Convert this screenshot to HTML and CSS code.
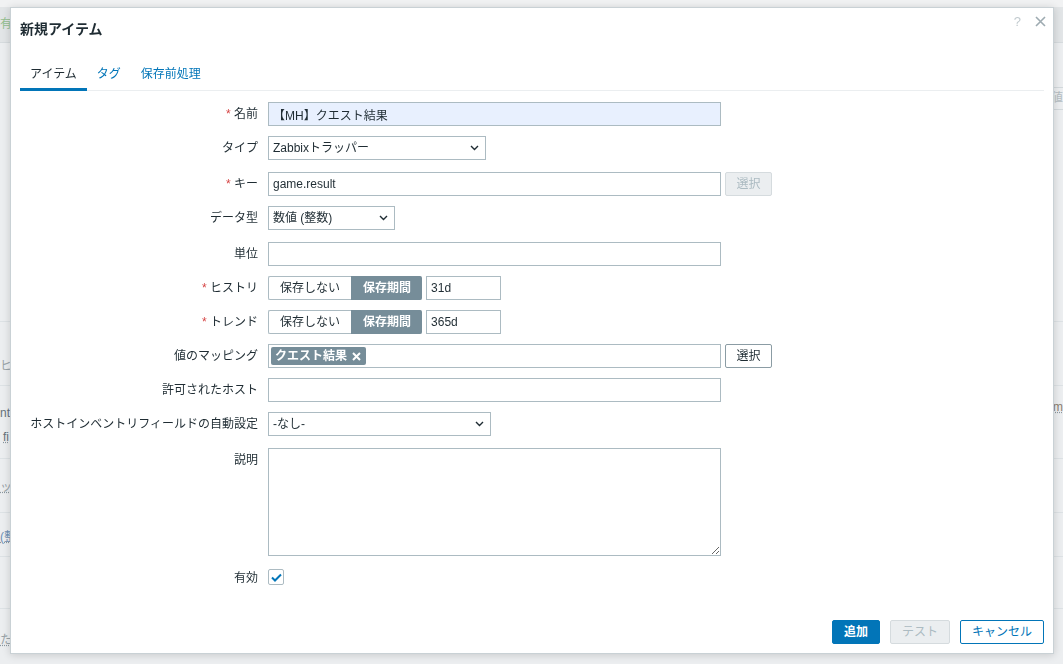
FILE: index.html
```html
<!DOCTYPE html>
<html lang="ja">
<head>
  <meta charset="UTF-8">
  <meta name="viewport" content="width=device-width, initial-scale=1">
  <title>新規アイテム</title>
  <link rel="stylesheet" href="styles.css">
</head>
<body>

  <!-- page behind the modal -->
  <div class="page">
    <div class="page-top"></div>
    <div class="page-band"><span class="page-status">有</span></div>
    <div class="page-filter"><span class="page-search">値</span></div>
    <div class="page-table">
      <div class="page-row row-1"><span class="frag">ヒ</span></div>
      <div class="page-row row-2">
        <div>
          <span class="frag dark">nt</span>
          <span class="frag dark link second">fi</span>
        </div>
        <span class="frag right link">m</span>
      </div>
      <div class="page-row row-3"><span class="frag link">ッ</span></div>
      <div class="page-row row-4"><span class="frag blue link">(整</span></div>
      <div class="page-row row-5"></div>
      <div class="page-row row-6 last"><span class="frag link">た</span></div>
    </div>
  </div>

  <div class="dialog">
    <div class="dialog-head">
      <h4>新規アイテム</h4>
      <div class="head-icons">
        <span class="help">?</span>
        <svg class="close" width="11" height="11" viewBox="0 0 11 11">
          <path d="M1 1L10 10M10 1L1 10" stroke="#9eabb1" stroke-width="1.6" fill="none"/>
        </svg>
      </div>
    </div>

    <div class="dialog-body">
      <ul class="tabs">
        <li class="active">アイテム</li>
        <li>タグ</li>
        <li>保存前処理</li>
      </ul>

      <div class="form-grid">
        <label class="required">名前</label>
        <div class="field"><input class="text wide autofill" type="text" value="【MH】クエスト結果"></div>

        <label>タイプ</label>
        <div class="field">
          <div class="select type-select"><span>Zabbixトラッパー</span>
            <svg width="9" height="6" viewBox="0 0 9 6"><path d="M1 1l3.5 3.5L8 1" stroke="#1f2c33" stroke-width="1.4" fill="none"/></svg>
          </div>
        </div>

        <label class="required">キー</label>
        <div class="field">
          <input class="text wide" type="text" value="game.result">
          <button class="btn btn-disabled pick">選択</button>
        </div>

        <label>データ型</label>
        <div class="field">
          <div class="select dtype-select"><span>数値 (整数)</span>
            <svg width="9" height="6" viewBox="0 0 9 6"><path d="M1 1l3.5 3.5L8 1" stroke="#1f2c33" stroke-width="1.4" fill="none"/></svg>
          </div>
        </div>

        <label>単位</label>
        <div class="field"><input class="text wide" type="text" value=""></div>

        <label class="required">ヒストリ</label>
        <div class="field">
          <div class="radio">
            <span>保存しない</span>
            <span class="on">保存期間</span>
          </div>
          <input class="text short" type="text" value="31d">
        </div>

        <label class="required">トレンド</label>
        <div class="field">
          <div class="radio">
            <span>保存しない</span>
            <span class="on">保存期間</span>
          </div>
          <input class="text short" type="text" value="365d">
        </div>

        <label>値のマッピング</label>
        <div class="field">
          <div class="multi">
            <span class="chip">クエスト結果
              <svg width="9" height="9" viewBox="0 0 9 9"><path d="M1 1L8 8M8 1L1 8" stroke="#fff" stroke-width="2" fill="none"/></svg>
            </span>
          </div>
          <button class="btn btn-grey pick">選択</button>
        </div>

        <label>許可されたホスト</label>
        <div class="field"><input class="text wide" type="text" value=""></div>

        <label>ホストインベントリフィールドの自動設定</label>
        <div class="field">
          <div class="select inv-select"><span>-なし-</span>
            <svg width="9" height="6" viewBox="0 0 9 6"><path d="M1 1l3.5 3.5L8 1" stroke="#1f2c33" stroke-width="1.4" fill="none"/></svg>
          </div>
        </div>

        <label>説明</label>
        <div class="field"><textarea class="text wide area"></textarea></div>

        <label>有効</label>
        <div class="field">
          <span class="check">
            <svg width="11" height="9" viewBox="0 0 11 9"><path d="M1 4.5L4 7.5L10 1.5" stroke="#0275b8" stroke-width="2" fill="none"/></svg>
          </span>
        </div>
      </div>
    </div>

    <div class="dialog-foot">
      <button class="btn btn-primary">追加</button>
      <button class="btn btn-disabled">テスト</button>
      <button class="btn btn-alt">キャンセル</button>
    </div>
  </div>

</body>
</html>
```

FILE: styles.css
```css
* {
  box-sizing: border-box;
}

body {
  margin: 0;
  height: 664px;
  overflow: hidden;
  background-color: #eceef0;
  color: #1f2c33;
  font-family: "Liberation Sans", "Noto Sans CJK JP", sans-serif;
  font-size: 12px;
  line-height: 16px;
}

/* page under the overlay */
.page-top {
  height: 7px;
  background-color: #f1f2f3;
}

.page-band {
  height: 36px;
  background-color: #e2e5e7;
  border-bottom: 1px solid #d6dbde;
  line-height: 35px;
  white-space: nowrap;
}

.page-status {
  color: #94bf90;
}

.page-filter {
  display: flex;
  justify-content: flex-end;
  height: 23px;
  margin-top: 44px;
}

.page-search {
  border-top: 1px solid #d3d9dc;
  border-bottom: 1px solid #d3d9dc;
  color: #b5bec3;
  line-height: 21px;
  white-space: nowrap;
}

.page-table {
  margin-top: 211px;
  border-top: 1px solid #dde2e5;
}

.page-row {
  display: flex;
  justify-content: space-between;
  border-bottom: 1px solid #dde2e5;
}

.page-row.last {
  border-bottom: none;
}

.row-1 { height: 64px; padding-top: 36px; }
.row-2 { height: 73px; padding-top: 13px; }
.row-3 { height: 54px; padding-top: 20px; }
.row-4 { height: 44px; padding-top: 16px; }
.row-5 { height: 52px; }
.row-6 { height: 56px; padding-top: 23px; }

.frag {
  display: block;
  white-space: nowrap;
  color: #9aa4a9;
}

.frag.dark {
  color: #66727a;
  margin-top: 6px;
}

.frag.second {
  margin-top: 8px;
  padding-left: 3px;
}

.frag.blue {
  color: #6f90b4;
}

.frag.link {
  text-decoration: underline dotted #8a979e;
}

.frag.right {
  color: #8d8070;
}

/* modal */
.dialog {
  position: fixed;
  left: 10px;
  top: 7px;
  width: 1044px;
  height: 647px;
  display: flex;
  flex-direction: column;
  background-color: #ffffff;
  border: 1px solid #c9d1d5;
  box-shadow: 0 1px 8px rgba(0, 0, 0, 0.16);
}

.dialog-head {
  display: flex;
  height: 42px;
  padding: 0 7px 0 9px;
}

.dialog-head h4 {
  flex: 1;
  margin: 0;
  font-size: 14px;
  font-weight: bold;
  line-height: 42px;
}

.head-icons {
  display: flex;
  align-items: center;
  gap: 14px;
  height: 27px;
}

.help {
  color: #c2cbcf;
  font-size: 13px;
}

.dialog-body {
  flex: 1;
  padding: 0 9px;
}

.tabs {
  display: flex;
  margin: 10px 0 0;
  padding: 0;
  list-style: none;
  border-bottom: 1px solid #ebeef0;
}

.tabs li {
  padding: 0 10px;
  margin-bottom: -1px;
  line-height: 28px;
  color: #0275b8;
  border-bottom: 3px solid transparent;
}

.tabs li.active {
  color: #1f2c33;
  border-bottom-color: #0275b8;
}

.form-grid {
  display: grid;
  grid-template-columns: 238px 1fr;
  column-gap: 10px;
  row-gap: 10px;
  margin-top: 11px;
}

.form-grid > label {
  text-align: right;
  line-height: 24px;
  white-space: nowrap;
}

.form-grid > label.required::before {
  content: "* ";
  color: #d64545;
}

.field {
  display: flex;
  align-items: flex-start;
  gap: 4px;
  min-height: 24px;
}

.text {
  height: 24px;
  margin: 0;
  padding: 0 4px;
  border: 1px solid #acbbc2;
  background-color: #ffffff;
  color: #1f2c33;
  font: inherit;
  outline: none;
}

.text.wide {
  width: 453px;
}

.text.short {
  width: 75px;
}

.text.autofill {
  background-color: #e8f0fe;
}

.text.area {
  height: 108px;
  padding: 4px;
  resize: both;
}

.select {
  display: flex;
  align-items: center;
  justify-content: space-between;
  height: 24px;
  margin-bottom: 2px;
  padding: 0 6px 0 4px;
  border: 1px solid #acbbc2;
}

.type-select { width: 218px; }
.dtype-select { width: 127px; }
.inv-select { width: 223px; }

.radio {
  display: flex;
}

.radio span {
  height: 24px;
  padding: 0 11px;
  line-height: 22px;
  border: 1px solid #acbbc2;
  border-right: none;
  border-radius: 2px 0 0 2px;
}

.radio span.on {
  background-color: #768d99;
  border-color: #768d99;
  border-radius: 0 2px 2px 0;
  color: #ffffff;
  font-weight: bold;
}

.multi {
  width: 453px;
  height: 24px;
  padding: 2px;
  border: 1px solid #acbbc2;
}

.chip {
  display: inline-flex;
  align-items: center;
  gap: 5px;
  height: 18px;
  padding: 0 5px 0 4px;
  border-radius: 2px;
  background-color: #768d99;
  color: #ffffff;
  font-weight: bold;
  line-height: 18px;
}

.check {
  display: flex;
  align-items: center;
  justify-content: center;
  width: 16px;
  height: 16px;
  margin-top: 3px;
  border: 1px solid #acbbc2;
  border-radius: 2px;
}

.btn {
  height: 24px;
  padding: 0 11px;
  border: 1px solid;
  border-radius: 2px;
  font: inherit;
  line-height: 22px;
  cursor: pointer;
}

.btn.pick {
  width: 47px;
  padding: 0;
}

.btn-primary {
  background-color: #0275b8;
  border-color: #0275b8;
  color: #ffffff;
  font-weight: bold;
}

.btn-disabled {
  background-color: #ebeef0;
  border-color: #d5dbde;
  color: #acbbc2;
}

.btn-alt {
  background-color: #ffffff;
  border-color: #0275b8;
  color: #0275b8;
}

.btn-grey {
  background-color: #ffffff;
  border-color: #8b9ca4;
  color: #1f2c33;
}

.dialog-foot {
  display: flex;
  justify-content: flex-end;
  gap: 10px;
  padding: 0 9px 9px;
}
```
